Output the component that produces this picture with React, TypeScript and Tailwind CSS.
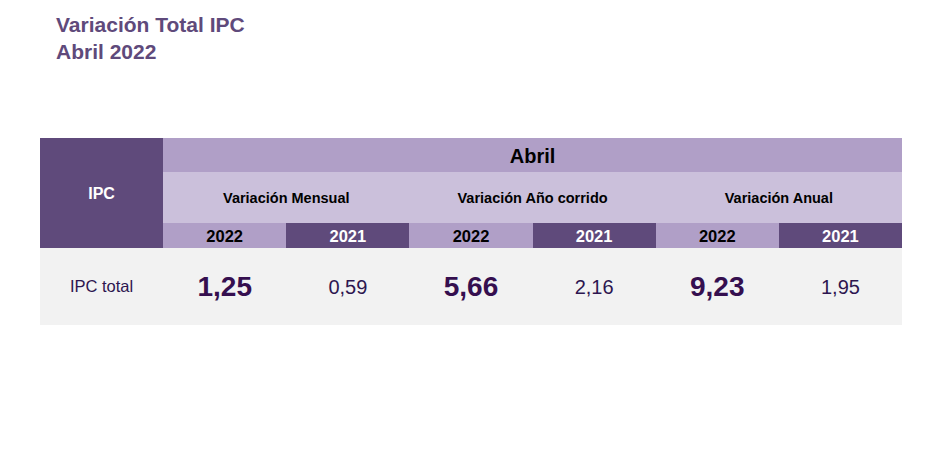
import React from 'react';

const groups = [
  { label: 'Variación Mensual', current: '1,25', previous: '0,59' },
  { label: 'Variación Año corrido', current: '5,66', previous: '2,16' },
  { label: 'Variación Anual', current: '9,23', previous: '1,95' },
];

export default function App() {
  return (
    <div
      className="h-[455px] w-[950px] bg-white"
      style={{ fontFamily: '"Liberation Sans", Arial, sans-serif' }}
    >
      <div className="pl-[56px] pt-[11px] text-[21px] font-bold leading-[27px] text-[#5f4a7b]">
        <div>Variación Total IPC</div>
        <div>Abril 2022</div>
      </div>

      <div className="ml-[40px] mt-[73px] grid w-[862px] grid-cols-7 grid-rows-[34px_51px_25px_77px]">
        <div className="row-span-3 flex items-center justify-center bg-[#5f4a7b] pt-[1px] text-[16px] font-bold text-white">
          IPC
        </div>
        <div className="col-span-6 flex items-center justify-center bg-[#b09fc7] pt-[2px] text-[20px] font-bold text-black">
          Abril
        </div>
        {groups.map((g) => (
          <div
            key={g.label}
            className="col-span-2 flex items-center justify-center bg-[#cbc0db] pt-[2px] text-[14.5px] font-bold text-black"
          >
            {g.label}
          </div>
        ))}
        {groups.map((g) => (
          <React.Fragment key={g.label + '-years'}>
            <div className="flex items-center justify-center bg-[#b09fc7] pt-[1px] text-[16.5px] font-bold text-black">
              2022
            </div>
            <div className="flex items-center justify-center bg-[#5f4a7b] pt-[1px] text-[16.5px] font-bold text-white">
              2021
            </div>
          </React.Fragment>
        ))}
        <div className="flex items-center justify-center bg-[#f2f2f2] text-[16.5px] text-[#2d1650]">
          IPC total
        </div>
        {groups.map((g) => (
          <React.Fragment key={g.label + '-values'}>
            <div className="flex items-center justify-center bg-[#f2f2f2] text-[28px] font-bold text-[#350f4f]">
              {g.current}
            </div>
            <div className="flex items-center justify-center bg-[#f2f2f2] text-[20px] text-[#2d1650]">
              {g.previous}
            </div>
          </React.Fragment>
        ))}
      </div>
    </div>
  );
}
